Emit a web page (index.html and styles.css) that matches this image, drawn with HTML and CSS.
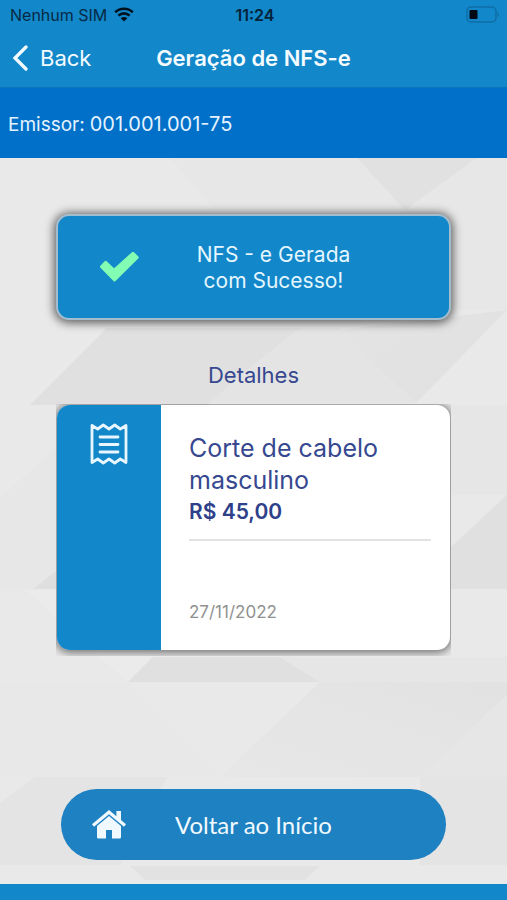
FILE: index.html
```html
<!DOCTYPE html>
<html lang="pt-BR">
<head>
<meta charset="utf-8">
<meta name="viewport" content="width=device-width, initial-scale=1">
<title>Geração de NFS-e</title>
<link rel="stylesheet" href="styles.css">
</head>
<body>
<div class="screen">
  <header class="header">
    <div class="status">
      <div class="carrier">
        <span>Nenhum SIM</span>
        <svg class="wifi" viewBox="0 0 20 15" aria-hidden="true">
          <path d="M1.2 5.2C6 .6 14 .6 18.8 5.2M4.4 8.6c3.2-3 8-3 11.2 0" fill="none" stroke="currentColor" stroke-width="2.6"/>
          <path d="M10 14.6 6.6 11.2c1.9-1.7 4.9-1.7 6.8 0z" fill="currentColor"/>
        </svg>
      </div>
      <time class="clock">11:24</time>
      <svg class="battery" viewBox="0 0 34 17" aria-hidden="true">
        <rect x="1" y="1" width="29" height="15" rx="4" fill="none" stroke="#0f6ea6" stroke-width="1.5"/>
        <rect x="3.500" y="4" width="8" height="9" rx="1" fill="#000914"/>
        <path d="M31.700 6c1.500.6 1.500 4.400 0 5z" fill="#0f6ea6"/>
      </svg>
    </div>
    <nav class="nav">
      <a class="back" href="#">
        <svg class="chevron" viewBox="0 0 16 26" aria-hidden="true"><path d="M14 2 3 13l11 11" fill="none" stroke="currentColor" stroke-width="3.300" stroke-linecap="round" stroke-linejoin="miter"/></svg>
        <span>Back</span>
      </a>
      <h1 class="title">Geração de NFS-e</h1>
    </nav>
  </header>
  <div class="issuer"><span class="issuer-label">Emissor:</span><span>001.001.001-75</span></div>
  <main class="main">
    <svg class="facets" viewBox="0 0 507 726" preserveAspectRatio="none" aria-hidden="true">
      <defs>
        <linearGradient id="shade" x1="0" y1="0" x2="1" y2="1"><stop offset="0" stop-color="#e4e4e4"/><stop offset="1" stop-color="#e0e0e0"/></linearGradient>
        <linearGradient id="fade" x1="1" y1="0" x2="0" y2="1"><stop offset="0" stop-color="#e2e2e2"/><stop offset="1" stop-color="#e7e7e7"/></linearGradient>
      </defs>
      <path d="M170 0h187l48 52H215z" fill="#e7e7e7"/>
      <path d="M357 0h120l-72 52z" fill="#e1e1e1"/>
      <path d="M477 0h30v152H340l65-100z" fill="#e7e7e7"/>
      <path d="M107 170h193L238 220l-30 27H30z" fill="#e0e0e0"/>
      <path d="M300 170h40l76 75H208z" fill="#e4e4e4"/>
      <path d="M340 172l167-20-91 93z" fill="url(#shade)"/>
      <path d="M0 340l56-50v141H0z" fill="#e7e7e7"/>
      <path d="M451 247h56v90h-56z" fill="#e6e6e6"/>
      <path d="M507 337v94h-56v-42z" fill="#e0e0e0"/>
      <path d="M56 413v18H33z" fill="#dfdfdf"/>
      <path d="M25 432h31l97 67-26 25z" fill="#ebebeb"/>
      <path d="M153 499h127l40 25H128z" fill="#e0e0e0"/>
      <path d="M280 499h227v25H320z" fill="#e6e6e6"/>
      <path d="M0 524h127l93 95H0z" fill="#e8e8e8"/>
      <path d="M320 524h187v13l-87 82H220z" fill="url(#fade)"/>
      <path d="M507 537v82h-87z" fill="#e6e6e6"/>
      <path d="M0 645l35-26h132l-47 88H0z" fill="#e4e4e4"/>
      <path d="M420 619h87v88h-87z" fill="#e4e4e4"/>
      <path d="M130 708h190l-15 14H145z" fill="#e2e2e2"/>
    </svg>
    <section class="success">
      <svg class="check" viewBox="0 0 40 32" aria-hidden="true"><path d="M2.500 15.700 6.700 11.300 15 19.300 34 2.300 38.200 6.500 15.500 29z" fill="#83fcb4" stroke="#83fcb4" stroke-width="3" stroke-linejoin="round"/></svg>
      <p class="message">NFS - e Gerada<br>com Sucesso!</p>
    </section>
    <h2 class="subtitle">Detalhes</h2>
    <div class="frame">
      <article class="card">
        <div class="stripe">
          <svg class="receipt" viewBox="0 0 38 42" fill="none" stroke="currentColor" stroke-linecap="round" stroke-linejoin="round" aria-hidden="true">
            <path d="M2 2.500 7.700 6l5.600-4L19 6l5.700-4 5.600 4L36 2.500v37L30.300 36l-5.600 4L19 36l-5.700 4-5.600-4L2 39.500z" stroke-width="2.800"/>
            <path d="M10 14h18M10 21.500h18M10 29h18" stroke-width="2.800"/>
          </svg>
        </div>
        <div class="body">
          <h3 class="service">Corte de cabelo masculino</h3>
          <p class="price">R$ 45,00</p>
          <hr class="rule">
          <time class="date" datetime="2022-11-27">27/11/2022</time>
        </div>
      </article>
    </div>
    <button class="home" type="button">
      <svg class="house" viewBox="0 0 34 29" fill="currentColor" aria-hidden="true">
        <path d="M17 0 0 14.200l2 2.500L17 4.200l15 12.500 2-2.500-5-4.200V1h-4.600v5.200z"/>
        <path d="M17 6 5 16v11q0 1.500 1.500 1.500H14V20h6v8.500h7.500Q29 28.500 29 27V16z"/>
      </svg>
      <span>Voltar ao Início</span>
    </button>
  </main>
  <footer class="footer"></footer>
</div>
</body>
</html>
```
FILE: styles.css
```css
* { box-sizing: border-box; }
body { margin: 0; font-family: Inter, "Liberation Sans", sans-serif; }
h1, h2, h3, p { margin: 0; font-weight: 400; }
svg { display: block; flex: none; }
.screen { min-height: 100vh; display: flex; flex-direction: column; background: #e9e9e9; }
.header { background: #1287c9; }
.status { height: 29px; padding: 0 7px 0 10px; display: grid; grid-template-columns: 1fr auto 1fr; align-items: center; color: #062a45; font-size: 16px; }
.carrier { display: flex; align-items: center; gap: 7px; }
.wifi { width: 20px; height: 15px; color: #00111f; }
.clock { font-weight: 600; color: #03233b; }
.battery { width: 34px; height: 17px; justify-self: end; }
.nav { height: 58px; padding: 0 12px; display: grid; grid-template-columns: 1fr auto 1fr; align-items: center; color: #f4fbff; font-size: 22px; }
.back { display: flex; align-items: center; gap: 12px; color: inherit; text-decoration: none; }
.chevron { width: 16px; height: 26px; }
.title { font-size: 22px; font-weight: 600; }
.issuer { height: 71px; padding: 2px 8px 0; display: flex; align-items: center; gap: 5px; background: #0070c8; border-top: 1px solid #0b73bd; color: #e4f3ff; font-size: 20px; }
.issuer-label { font-size: 19px; }
.main { position: relative; isolation: isolate; flex: 1; padding: 56px 56px 24px; display: flex; flex-direction: column; }
.facets { position: absolute; inset: 0; width: 100%; height: 100%; z-index: -1; }
.success { min-height: 106px; padding: 0 41px; display: flex; align-items: center; background: #1287c9; border: 2px solid #a3bdce; border-radius: 13px; box-shadow: 0 1px 10px 2px rgba(0, 0, 0, .6); }
.check { width: 40px; height: 32px; }
.message { flex: 1; padding: 2px 40px 0; text-align: center; color: #e4f6ff; font-size: 21px; line-height: 26px; }
.subtitle { margin-top: 41px; color: #364890; font-size: 22px; line-height: 28px; text-align: center; }
.frame { margin-top: 15px; padding: 1px 1px 6px; overflow: hidden; }
.card { min-height: 245px; display: flex; background: #fff; border-radius: 13px; box-shadow: 0 1px 8px 2px rgba(0, 0, 0, .5); }
.stripe { width: 104px; flex: none; padding-top: 18px; display: flex; justify-content: center; align-items: flex-start; background: #1287c9; border-radius: 13px 0 0 13px; color: #e8f7ff; }
.receipt { width: 38px; height: 42px; }
.body { flex: 1; padding: 27px 19px 28px 28px; display: flex; flex-direction: column; }
.service { max-width: 220px; color: #364890; font-size: 25px; line-height: 32px; }
.price { color: #2d4089; font-size: 21px; line-height: 32px; font-weight: 600; }
.rule { width: 100%; height: 2px; margin: 11px 0 0; border: 0; background: #e2e2e2; }
.date { margin-top: auto; color: #919191; font-size: 17px; line-height: 20px; }
.home { margin: auto 5px 0; height: 71px; padding: 0 31px; display: flex; align-items: center; gap: 49px; border: 0; border-radius: 36px; background: #1e81c1; color: #f0f9ff; font-family: Lato, sans-serif; font-size: 24px; text-align: left; }
.house { width: 34px; height: 29px; }
.footer { height: 16px; background: #1287c9; }
```
